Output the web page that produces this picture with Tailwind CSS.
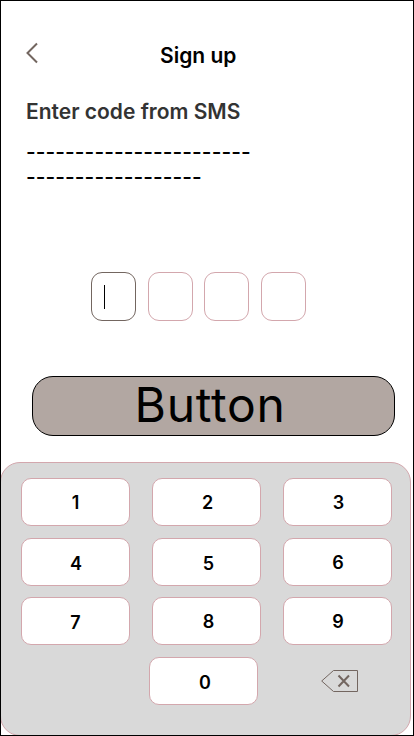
<!DOCTYPE html>
<html lang="en">
<head>
<meta charset="utf-8">
<title>Sign up</title>
<script src="https://cdn.jsdelivr.net/npm/@tailwindcss/browser@4"></script>
</head>
<body class="bg-white font-['Inter',sans-serif] text-black">
<div class="relative flex h-[736px] w-[414px] flex-col overflow-hidden">
  <header class="flex h-[80px] items-start pl-[25px] pt-[42px]">
    <svg class="h-[22px] w-[14px]" viewBox="0 0 14 22" fill="none" stroke="#736660" stroke-width="2"><path d="M12 1.5 L2.5 11 L12 20.5"/></svg>
    <h1 class="ml-[121px] text-[21px] leading-[28px] font-semibold">Sign up</h1>
  </header>
  <main class="flex h-[382px] flex-col">
    <h2 class="ml-[26px] mt-[18px] text-[21px] leading-[28px] font-semibold text-[#333333] whitespace-nowrap">Enter code from SMS</h2>
    <p class="ml-[26px] mt-[13px] text-[21px] leading-[25px] font-medium tracking-[0.06px] whitespace-nowrap">-----------------------<br>------------------</p>
    <div class="ml-[91px] mt-[83px] flex gap-[11.5px]">
      <div class="h-[49px] w-[45px] rounded-[11px] border border-[#736660] pl-[12px] pt-[12px]"><div class="h-[24px] w-px bg-black"></div></div>
      <div class="h-[49px] w-[45px] rounded-[11px] border border-[#d3a7ad]"></div>
      <div class="h-[49px] w-[45px] rounded-[11px] border border-[#d3a7ad]"></div>
      <div class="h-[49px] w-[45px] rounded-[11px] border border-[#d3a7ad]"></div>
    </div>
    <button class="ml-[32px] mt-[55px] flex h-[60px] w-[363px] items-center justify-center rounded-[21px] border border-black bg-[#b2a7a2] pb-[2px] pr-[7px] text-[48px] leading-[58px] tracking-[0.7px]">Button</button>
  </main>
  <section class="flex h-[274px] w-[411px] flex-col rounded-[20px] border border-[#d3a7ad] bg-[#d9d9d9] pl-[20px] pt-[15px] text-[18px] leading-[22px] font-semibold">
    <div class="flex gap-[22px]">
      <button class="h-[48px] w-[109px] rounded-[10px] border border-[#d3a7ad] bg-white pt-[2px]">1</button>
      <button class="h-[48px] w-[109px] rounded-[10px] border border-[#d3a7ad] bg-white pl-[2px] pt-[2px]">2</button>
      <button class="h-[48px] w-[109px] rounded-[10px] border border-[#d3a7ad] bg-white pl-[2px] pt-[2px]">3</button>
    </div>
    <div class="mt-[12px] flex gap-[22px]">
      <button class="h-[48px] w-[109px] rounded-[10px] border border-[#d3a7ad] bg-white pl-px pt-[4px]">4</button>
      <button class="h-[48px] w-[109px] rounded-[10px] border border-[#d3a7ad] bg-white pl-[4px] pt-[4px]">5</button>
      <button class="h-[48px] w-[109px] rounded-[10px] border border-[#d3a7ad] bg-white pl-px pt-[2px]">6</button>
    </div>
    <div class="mt-[11px] flex gap-[22px]">
      <button class="h-[48px] w-[109px] rounded-[10px] border border-[#d3a7ad] bg-white pt-[4px]">7</button>
      <button class="h-[48px] w-[109px] rounded-[10px] border border-[#d3a7ad] bg-white pl-[4px] pt-[2px]">8</button>
      <button class="h-[48px] w-[109px] rounded-[10px] border border-[#d3a7ad] bg-white pl-px pt-[2px]">9</button>
    </div>
    <div class="mt-[12px] flex pl-[128px]">
      <button class="h-[48px] w-[109px] rounded-[10px] border border-[#d3a7ad] bg-white pl-[3px] pt-[4px]">0</button>
      <svg class="ml-[63px] mt-[13px] h-[22px] w-[37px]" viewBox="0 0 37 22" fill="none" stroke="#736660"><path d="M12.5 .5 H36.5 V21.5 H12.5 L.7 11 Z"/><path d="M17.5 5.5 L28 16.5 M28 5.5 L17.5 16.5" stroke-width="2"/></svg>
    </div>
  </section>
  <div class="pointer-events-none absolute inset-0 border border-black"></div>
</div>
</body>
</html>
